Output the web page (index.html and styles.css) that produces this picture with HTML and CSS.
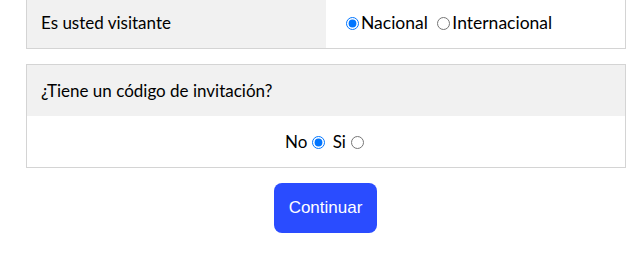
FILE: index.html
```html
<!DOCTYPE html>
<html lang="es">
<head>
<meta charset="utf-8">
<link rel="stylesheet" href="styles.css">
</head>
<body>
<div class="page">
  <div class="box row">
    <div class="cell label">Es usted visitante</div>
    <div class="cell value"><input type="radio" name="tipo" checked><span>Nacional</span> <input type="radio" name="tipo"><span>Internacional</span></div>
  </div>
  <div class="box second">
    <div class="cell label head">¿Tiene un código de invitación?</div>
    <div class="cell choice">No<input type="radio" name="inv" checked> Si<input type="radio" name="inv"></div>
  </div>
  <div class="actions">
    <button class="btn">Continuar</button>
  </div>
</div>
</body>
</html>
```
FILE: styles.css
```css
html, body { margin: 0; padding: 0; background: #fff; }
body { font-family: Lato, "Liberation Sans", sans-serif; color: #000; }
.page { margin: -4px 0 0 26px; width: 600px; }
.box {
  box-sizing: border-box;
  width: 600px;
  border: 1px solid #d4d4d4;
  font-size: 17px;
}
.row { display: grid; grid-template-columns: 299px 299px; }
.cell { height: 51px; line-height: 51px; box-sizing: border-box; white-space: nowrap; }
.label { background: #f1f1f1; padding-left: 14px; }
.value { background: #fff; padding-left: 15px; font-size: 17.5px; }
.value input { margin: 0 2px 0 5px; vertical-align: -1px; }
.second { margin-top: 15px; }
.choice { text-align: center; background: #fff; }
.choice input { margin: 0 3px 0 5px; vertical-align: -1px; }
.actions { display: flex; justify-content: center; margin-top: 15px; }
.btn {
  width: 103px; height: 50px; margin-left: -1px;
  background: #2a4cff; color: #fff; border: none; border-radius: 8px;
  font-family: "Liberation Sans", Arial, sans-serif; font-size: 17px;
}
```
